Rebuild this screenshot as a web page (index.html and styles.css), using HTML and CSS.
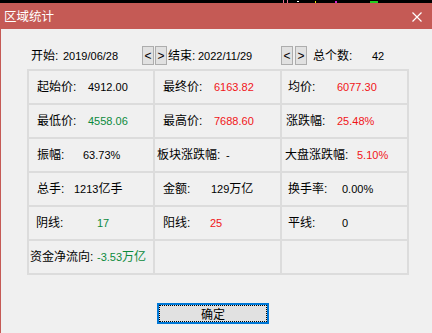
FILE: index.html
```html
<!DOCTYPE html>
<html lang="zh">
<head>
<meta charset="utf-8">
<title>区域统计</title>
<link rel="stylesheet" href="styles.css">
</head>
<body>
<div class="strip">
  <svg width="432" height="3" viewBox="0 0 432 3">
    <rect x="283" y="0" width="1" height="3" fill="#e87090"/>
    <rect x="287" y="0" width="1" height="3" fill="#e87090"/>
    <rect x="297" y="1" width="2" height="1" fill="#ffffff"/>
    <rect x="315" y="1" width="1" height="2" fill="#e8e000"/>
    <rect x="335" y="1" width="2" height="2" fill="#d020d0"/>
    <rect x="370" y="1" width="8" height="2" fill="#20d020"/>
  </svg>
</div>
<div class="titlebar">
  <span class="title">区域统计</span>
  <svg class="close" width="10" height="10" viewBox="0 0 10 10">
    <path d="M0.5 0.5 L9.5 9.5 M9.5 0.5 L0.5 9.5" stroke="#fff" stroke-width="1.2" fill="none"/>
  </svg>
</div>
<div class="win">
  <div class="hdr">
    <span class="hi h-start">开始:</span>
    <span class="hi n d1">2019/06/28</span>
    <span class="hi btns b1"><span class="nb">&lt;</span><span class="nb">&gt;</span></span>
    <span class="hi h-end">结束:</span>
    <span class="hi n d2">2022/11/29</span>
    <span class="hi btns b2"><span class="nb">&lt;</span><span class="nb">&gt;</span></span>
    <span class="hi h-cnt">总个数:</span>
    <span class="hi n">42</span>
  </div>

  <div class="grid">
    <div class="c"><span class="k p8 w59">起始价:</span><span class="n">4912.00</span></div>
    <div class="c"><span class="k p8 w59">最终价:</span><span class="n red">6163.82</span></div>
    <div class="c"><span class="k p6 w55">均价:</span><span class="n red">6077.30</span></div>

    <div class="c"><span class="k p8 w59">最低价:</span><span class="n green">4558.06</span></div>
    <div class="c"><span class="k p8 w59">最高价:</span><span class="n red">7688.60</span></div>
    <div class="c"><span class="k p4 w55">涨跌幅:</span><span class="n red">25.48%</span></div>

    <div class="c"><span class="k p8 w54">振幅:</span><span class="n">63.73%</span></div>
    <div class="c"><span class="k p2 w71">板块涨跌幅:</span><span class="n">-</span></div>
    <div class="c"><span class="k p3 w75">大盘涨跌幅:</span><span class="n red">5.10%</span></div>

    <div class="c"><span class="k p8 w45">总手:</span><span class="n">1213<span class="cj">亿手</span></span></div>
    <div class="c"><span class="k p8 w56">金额:</span><span class="n">129<span class="cj">万亿</span></span></div>
    <div class="c"><span class="k p6 w60">换手率:</span><span class="n">0.00%</span></div>

    <div class="c"><span class="k p7 w68">阴线:</span><span class="n green">17</span></div>
    <div class="c"><span class="k p8 w55">阳线:</span><span class="n red">25</span></div>
    <div class="c"><span class="k p6 w60">平线:</span><span class="n">0</span></div>

    <div class="c"><span class="k p1 w68">资金净流向:</span><span class="n green">-3.53<span class="cj">万亿</span></span></div>
    <div class="c"></div>
    <div class="c"></div>
  </div>

  <div class="foot"><button class="ok">确定</button></div>
</div>
</body>
</html>
```

FILE: styles.css
```css
* { box-sizing: border-box; }
html, body {
  margin: 0;
  padding: 0;
  width: 432px;
  height: 333px;
  overflow: hidden;
  background: #f0f0f0;
  font-family: "Liberation Sans", "Noto Sans CJK SC", sans-serif;
  font-size: 12px;
  color: #000;
}
.strip {
  height: 3px;
  background: #000;
  line-height: 0;
}
.strip svg { display: block; }
.titlebar {
  height: 26px;
  background: #c55a55;
  display: flex;
  align-items: center;
  justify-content: space-between;
  padding: 0 10px 0 4px;
}
.title {
  color: #fff;
  font-size: 12.5px;
  line-height: 14px;
  font-family: "Noto Sans CJK SC", sans-serif;
}
.close { display: block; margin-top: 1px; }
.win {
  height: 304px;
  border-left: 1px solid #c55a55;
  padding-top: 17px;
}
.hdr {
  display: flex;
  align-items: center;
  height: 19px;
  padding-left: 30px;
  line-height: 14px;
}
.hi { flex: none; display: inline-block; white-space: nowrap; }
.h-start { width: 32px; }
.d1 { width: 79px; }
.b1 { width: 26px; }
.h-end { width: 30px; }
.d2 { width: 83px; }
.b2 { width: 32px; }
.h-cnt { width: 59px; }
.btns { display: flex; gap: 1px; }
.b2 { gap: 2px; }
.nb {
  width: 12px;
  height: 19px;
  border: 1px solid #adadad;
  background: #e1e1e1;
  display: flex;
  align-items: center;
  justify-content: center;
  font-size: 12px;
  color: #000;
}
.n {
  font-family: "Liberation Sans", "Noto Sans CJK SC", sans-serif;
  font-size: 11px;
}
.n .cj { font-size: 12px; }
.n:not(.hi) { white-space: nowrap; }
.grid {
  margin: 4px 0 0 26px;
  width: fit-content;
  display: grid;
  grid-template-columns: 124px 125px 125px;
  grid-auto-rows: 32px;
  gap: 2px;
  padding: 2px;
  background: #dcdcdc;
}
.c {
  background: #f0f0f0;
  display: flex;
  align-items: center;
  line-height: 14px;
  white-space: nowrap;
}
.k { flex: none; white-space: nowrap; }
.p1 { padding-left: 1px; }
.p2 { padding-left: 2px; }
.p3 { padding-left: 3px; }
.p4 { padding-left: 4px; }
.p6 { padding-left: 6px; }
.p7 { padding-left: 7px; }
.p8 { padding-left: 8px; }
.w45 { width: 45px; }
.w54 { width: 54px; }
.w55 { width: 55px; }
.w56 { width: 56px; }
.w59 { width: 59px; }
.w60 { width: 60px; }
.w68 { width: 68px; }
.w71 { width: 71px; }
.w75 { width: 75px; }
.red { color: #f01418; }
.green { color: #0c8a3c; }
.foot {
  padding: 28px 0 0 156px;
}
.ok {
  display: block;
  width: 112px;
  height: 21px;
  margin: 0;
  padding: 0;
  border: 2px solid #0078d7;
  background: #e1e1e1;
  outline: 1px dotted #000;
  outline-offset: -3px;
  font-family: "Noto Sans CJK SC", sans-serif;
  font-size: 12px;
  line-height: 14px;
  color: #000;
}
```
